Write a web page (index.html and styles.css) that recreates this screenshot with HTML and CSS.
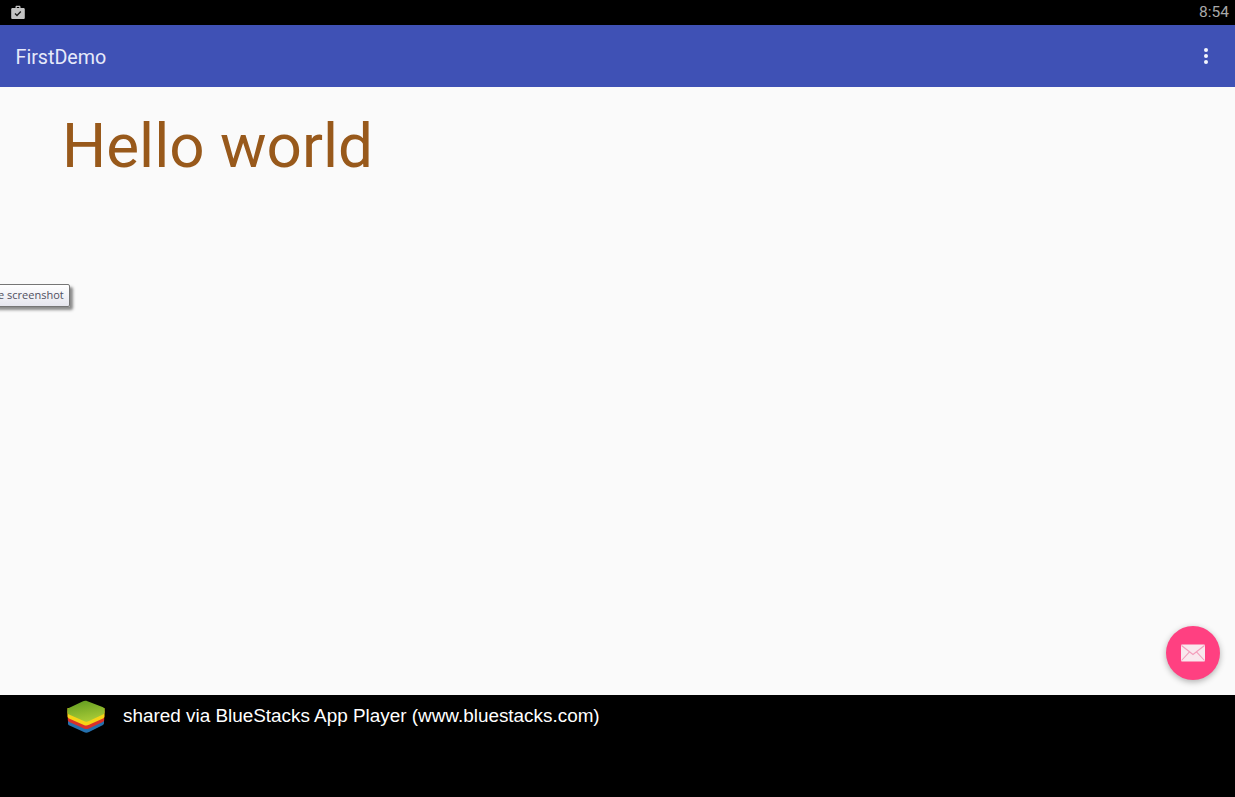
FILE: index.html
```html
<!DOCTYPE html>
<html lang="en">
<head>
<meta charset="utf-8">
<title>FirstDemo</title>
<link rel="stylesheet" href="styles.css">
</head>
<body>
<div class="screen">
  <div class="status-bar">
    <svg class="status-icon" width="16" height="16" viewBox="0 0 16 16">
      <path fill="#c4c4c4" fill-rule="evenodd" d="M5.500 3V2C5.500 1.300 6 .8 6.700.8h2.600c.7 0 1.200.5 1.200 1.200v1h3c.8 0 1.300.6 1.300 1.300v8.400c0 .8-.5 1.300-1.300 1.300h-11c-.8 0-1.300-.5-1.300-1.300V4.300c0-.7.5-1.300 1.300-1.300zM6.800 2v1h2.400V2z"/>
      <path fill="none" stroke="#1c1c1c" stroke-width="1.400" d="M5 8.500l2 2 3.800-3.900"/>
    </svg>
    <span class="clock">8:54</span>
  </div>
  <header class="app-bar">
    <span class="app-title">FirstDemo</span>
    <span class="overflow" aria-label="More options"><i></i><i></i><i></i></span>
  </header>
  <main class="content">
    <h1 class="hello">Hello world</h1>
    <div class="tooltip">e screenshot</div>
    <button class="fab" aria-label="Send email">
      <svg width="24" height="18" viewBox="0 0 24 18">
        <rect x="0" y="0.500" width="24" height="17" rx="1" fill="#f9e8ee"/>
        <path fill="none" stroke="#f39dbb" stroke-width="1.100" d="M0.500 1.500L12 10.500 23.500 1.500M0.500 16.500L8.500 7.800M23.500 16.500L15.500 7.800"/>
      </svg>
    </button>
  </main>
  <footer class="share-bar">
    <svg class="logo" width="38" height="33" viewBox="0 0 38 33">
      <defs>
        <linearGradient id="logo-top" x1="0" y1="0" x2="0.300" y2="1">
          <stop offset="0" stop-color="#5f9a1f"/>
          <stop offset="1" stop-color="#a5c936"/>
        </linearGradient>
      </defs>
      <path fill="#2470ae" d="M1 14h36v9c0 1-.5 1.700-1.500 2.200L22 32c-1.900.9-3.400.9-5.200.1L2.500 25.600C1.500 25.100 1 24.400 1 23.400z"/>
      <path fill="#d9302a" d="M.8 11h36.400v8.800c0 1-.5 1.700-1.500 2.200L22 28.400c-1.900.9-3.400.9-5.200.1L2.300 22C1.300 21.500.8 20.800.8 19.800z"/>
      <path fill="#f6d416" d="M.5 8h37v8.300c0 1-.5 1.700-1.500 2.200L22 24.800c-1.900.9-3.400.9-5.200.1L2 18.400c-1-.5-1.500-1.200-1.500-2.200z"/>
      <path fill="url(#logo-top)" d="M1.300 8.300L15.500 1.400c1.700-.8 3.300-.9 5-.2l15 5.700c1.400.5 2 1.300 2 2.500v2.800c0 1-.5 1.700-1.500 2.200L22 21c-1.900.9-3.400.9-5.200.1L2 14.600c-1-.5-1.500-1.200-1.500-2.200V10c0-.8.200-1.300.8-1.700z"/>
    </svg>
    <span class="share-text">shared via BlueStacks App Player (www.bluestacks.com)</span>
  </footer>
</div>
</body>
</html>
```

FILE: styles.css
```css
* {
  box-sizing: border-box;
}

html,
body {
  margin: 0;
  padding: 0;
}

body {
  width: 1235px;
  height: 797px;
  overflow: hidden;
  background: #000;
  font-family: Roboto, "Liberation Sans", sans-serif;
}

.screen {
  display: flex;
  flex-direction: column;
  width: 1235px;
  height: 797px;
}

.status-bar {
  flex: 0 0 25px;
  display: flex;
  align-items: center;
  justify-content: space-between;
  padding: 0 6px 0 10px;
  background: #000;
}

.status-icon {
  display: block;
}

.clock {
  color: #a9a9a9;
  font-size: 15.500px;
  line-height: 25px;
}

.app-bar {
  flex: 0 0 62px;
  display: flex;
  align-items: center;
  justify-content: space-between;
  padding: 2px 27px 0 15.500px;
  background: #3f51b5;
}

.app-title {
  color: #e6eafa;
  font-size: 19.700px;
}

.overflow {
  display: flex;
  flex-direction: column;
  gap: 2px;
  margin-top: -2px;
}

.overflow i {
  display: block;
  width: 4px;
  height: 4px;
  border-radius: 50%;
  background: #f4f6fd;
}

.content {
  position: relative;
  flex: 0 0 608px;
  background: #fafafa;
}

.hello {
  margin: 0;
  padding: 23px 0 0 62px;
  color: #98591b;
  font-size: 62px;
  font-weight: 400;
  line-height: 72px;
}

.tooltip {
  position: absolute;
  left: -6px;
  top: 197px;
  width: 76px;
  height: 23px;
  padding-left: 3px;
  border: 1px solid #767676;
  border-radius: 2px;
  background: linear-gradient(#fff, #e6e6ee);
  box-shadow: 3px 3px 3px #8a8a8a;
  color: #505060;
  font-family: "Open Sans", "Liberation Sans", sans-serif;
  font-size: 11px;
  line-height: 20px;
  white-space: nowrap;
}

.fab {
  position: absolute;
  right: 15.500px;
  bottom: 15px;
  display: flex;
  align-items: center;
  justify-content: center;
  width: 54px;
  height: 54px;
  padding: 0;
  border: 0;
  border-radius: 50%;
  background: #ff4081;
  box-shadow: 0 2px 6px rgba(0, 0, 0, 0.3);
}

.share-bar {
  flex: 1;
  display: flex;
  align-items: flex-start;
  padding: 5px 0 0 66.500px;
  background: #000;
}

.logo {
  flex: none;
  width: 38px;
  height: 33px;
}

.share-text {
  margin: 5px 0 0 18.500px;
  color: #fff;
  font-family: "Liberation Sans", Arial, sans-serif;
  font-size: 18.900px;
  line-height: 22px;
}
```
